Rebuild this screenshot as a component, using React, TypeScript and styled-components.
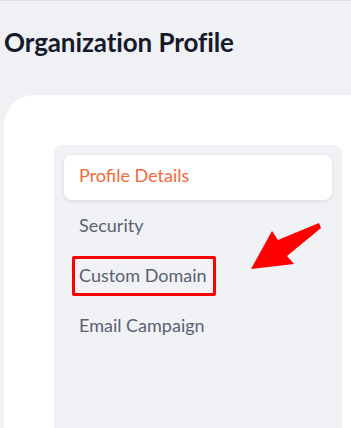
import React from "react";
import styled, { createGlobalStyle } from "styled-components";

const GlobalStyle = createGlobalStyle`
    html, body {
        margin: 0;
        padding: 0;
        background: #f0f1f5;
    }
    body {
        font-family: Lato, "Noto Sans", sans-serif;
    }
`;

const NAV_ITEMS = ["Profile Details", "Security", "Custom Domain", "Email Campaign"];

export default function App() {
    return (
        <Page>
            <GlobalStyle />
            <Title>Organization Profile</Title>
            <Card>
                <SideNav>
                    {NAV_ITEMS.map((label, idx) => (
                        <NavItem key={label} active={idx === 0}>
                            {label}
                            {label === "Custom Domain" && <Highlight />}
                        </NavItem>
                    ))}
                    <Arrow viewBox="0 0 80 50" width="80" height="50">
                        <polygon
                            points="1,46 22,8 28,17 69,0 71,5 37,33 44,41"
                            fill="#ff0000"
                            strokeLinejoin="round"
                        />
                    </Arrow>
                </SideNav>
            </Card>
        </Page>
    );
}

const Page = styled.div`
    height: 428px;
    border-top: 1px solid #dcdfe6;
    box-sizing: border-box;
    display: flex;
    flex-direction: column;
    overflow: hidden;
`;

const Title = styled.h1`
    margin: 0;
    padding: 25px 0 0 4px;
    height: 69px;
    font-size: 26px;
    font-weight: 700;
    color: #161a2b;
    letter-spacing: -0.1px;
`;

const Card = styled.div`
    flex: 1;
    margin-left: 4px;
    background: #fff;
    border-top-left-radius: 30px;
    padding: 50px 9px 0 50px;
    display: flex;
`;

const SideNav = styled.div`
    position: relative;
    flex: 1;
    background: #f1f2f6;
    border-radius: 8px 8px 0 0;
    padding: 10px 10px 0 10px;
    display: flex;
    flex-direction: column;
    gap: 5px;
`;

const NavItem = styled.div<{ active?: boolean }>`
    position: relative;
    height: 45px;
    box-sizing: border-box;
    display: flex;
    align-items: center;
    padding: 0 0 5px 15px;
    border-radius: 8px;
    font-size: 18px;
    color: ${(p) => (p.active ? "#f26a3b" : "#5a6072")};
    background: ${(p) => (p.active ? "#fff" : "transparent")};
    box-shadow: ${(p) => (p.active ? "0 1px 4px rgba(30, 40, 70, 0.12)" : "none")};
`;

const Highlight = styled.span`
    position: absolute;
    left: 8px;
    top: 1px;
    width: 144px;
    height: 40px;
    border: 3px solid #ff0000;
    border-radius: 2px;
    box-sizing: border-box;
`;

const Arrow = styled.svg`
    position: absolute;
    left: 196px;
    top: 78px;
`;
